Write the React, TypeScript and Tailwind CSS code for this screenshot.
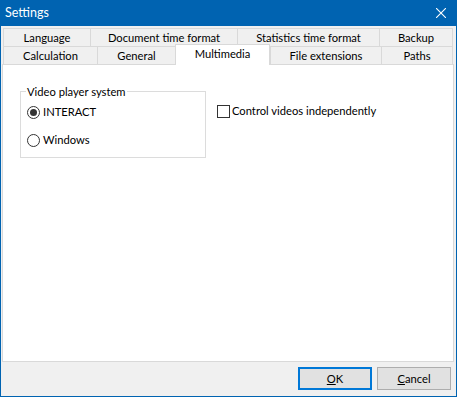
import React from 'react';

const font = { fontFamily: 'Lato, "Segoe UI", sans-serif' };

function Tab({ label, width, last }: { label: string; width: string; last?: boolean }) {
  return (
    <div
      className={`${width} h-full flex items-center justify-center border-l border-t border-[#d9d9d9] bg-[#f0f0f0] pt-px ${last ? 'border-r' : ''}`}
    >
      {label}
    </div>
  );
}

function Radio({ checked, label }: { checked?: boolean; label: string }) {
  return (
    <label className="h-[20px] flex items-center gap-[3px]">
      <span className="w-[13px] h-[13px] rounded-full border border-[#333333] bg-white flex items-center justify-center">
        {checked && <span className="w-[7px] h-[7px] rounded-full bg-[#333333]" />}
      </span>
      <span>{label}</span>
    </label>
  );
}

export default function App() {
  return (
    <div
      className="w-[457px] h-[397px] flex flex-col bg-[#0063b1] text-[11.2px] leading-[16px] text-black select-none"
      style={font}
    >
      {/* title bar */}
      <div className="h-[26px] flex items-center justify-between pl-[5px] pr-[11px] text-white">
        <span className="text-[12.5px] pb-px">Settings</span>
        <svg width="10" height="10" viewBox="0 0 10 10" className="mb-px">
          <path d="M0 0L10 10M10 0L0 10" stroke="white" strokeWidth="1.1" />
        </svg>
      </div>

      {/* client area */}
      <div className="flex-1 mx-px mb-px bg-[#f0f0f0] flex flex-col">
        <div className="ml-px w-[452px] pt-[2px]">
          <div className="h-[18px] flex pl-px">
            <Tab label="Language" width="w-[87px]" />
            <Tab label="Document time format" width="w-[147px]" />
            <Tab label="Statistics time format" width="w-[142px]" />
            <Tab label="Backup" width="w-[74px]" last />
          </div>
          <div className="h-[18px] flex pl-px">
            <Tab label="Calculation" width="w-[94px]" />
            <Tab label="General" width="w-[78px]" />
            <div className="relative z-10 w-[95px] h-[21px] -mt-[2px] flex items-start justify-center pt-[1px] bg-white border-l border-r border-t border-[#d9d9d9]">
              Multimedia
            </div>
            <Tab label="File extensions" width="w-[111px]" />
            <Tab label="Paths" width="w-[72px]" last />
          </div>

          {/* tab page */}
          <div className="h-[298px] bg-white border border-[#d9d9d9] flex items-start">
            <div className="relative ml-[17px] mt-[26px] w-[186px] h-[67px] border border-[#dcdcdc] pl-[6px] pt-[10px] flex flex-col gap-[8px]">
              <span className="absolute -top-[8px] left-[5px] bg-white px-px">Video player system</span>
              <Radio checked label="INTERACT" />
              <Radio label="Windows" />
            </div>
            <label className="ml-[11px] mt-[38px] flex items-center gap-[2px]">
              <span className="w-[13px] h-[13px] border border-[#333333] bg-white" />
              <span>Control videos independently</span>
            </label>
          </div>
        </div>

        {/* buttons */}
        <div className="flex justify-end gap-[5px] pt-[5px] pr-[5px]">
          <button className="w-[74px] h-[23px] bg-[#e1e1e1] border-2 border-[#0078d7] flex items-center justify-center">
            <span><span className="underline">O</span>K</span>
          </button>
          <button className="w-[74px] h-[23px] bg-[#e1e1e1] border border-[#adadad] flex items-center justify-center">
            <span><span className="underline">C</span>ancel</span>
          </button>
        </div>
      </div>
    </div>
  );
}
